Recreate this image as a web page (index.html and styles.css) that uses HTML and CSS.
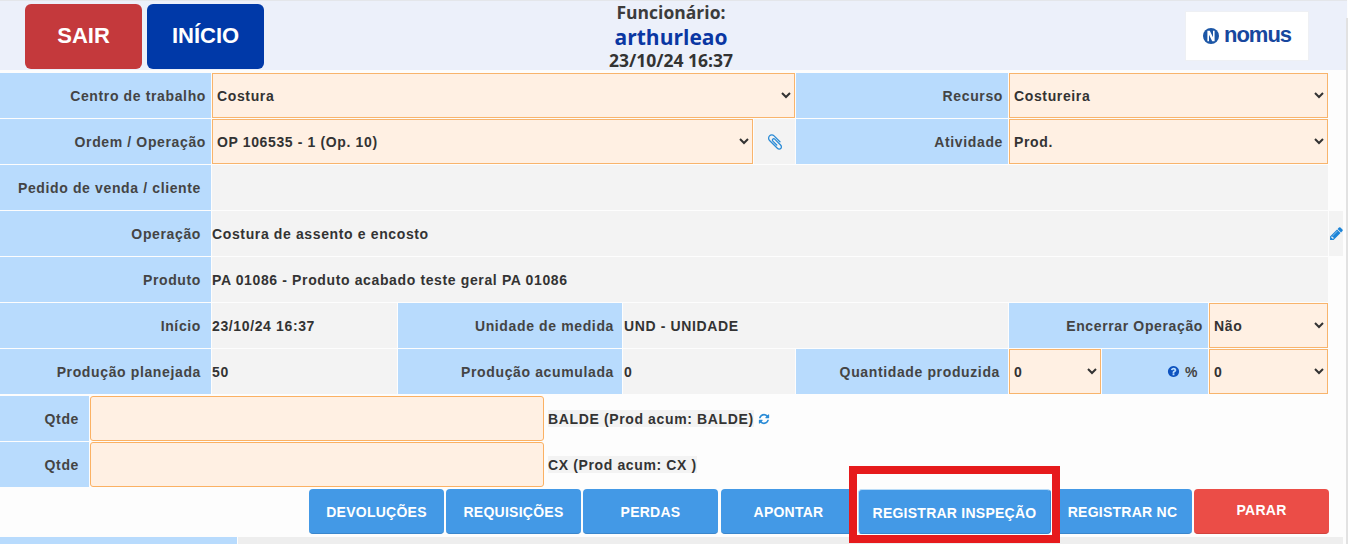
FILE: index.html
```html
<!DOCTYPE html>
<html lang="en">
<head>
    <meta charset="UTF-8">
    <meta name="viewport" content="width=device-width, initial-scale=1.0">
    <title>Apontamento</title>
    <link rel="stylesheet" href="styles.css">
</head>
<body>
    <!-- Top bar -->
    <div class="top-bar">
        <div class="top-buttons">
            <a class="big-button exit-button" href="#">SAIR</a>
            <a class="big-button home-button" href="#">INÍCIO</a>
        </div>
        <div class="employee">
            <div class="employee-title">Funcionário:</div>
            <div class="employee-name">arthurleao</div>
            <div class="employee-date">23/10/24 16:37</div>
        </div>
        <div class="logo">
            <svg class="logo-mark" viewBox="0 0 20 20" aria-hidden="true">
                <circle cx="10" cy="10" r="10" fill="#1c56a6"/>
                <path d="M5.500 3.500h3l4 8v-8h2v13h-3l-4-8v8h-2z" fill="#fff"/>
            </svg>
            <span class="logo-text">nomus</span>
        </div>
    </div>

    <!-- Main form -->
    <form class="form-grid" onsubmit="return false;">
        <div class="cell label span-2 near">Centro de trabalho</div>
        <div class="cell field span-centro">
            <select><option>Costura</option></select>
        </div>
        <div class="cell label span-recurso near">Recurso</div>
        <div class="cell field span-right">
            <select><option>Costureira</option></select>
        </div>

        <div class="cell label span-2 near">Ordem / Operação</div>
        <div class="cell field span-ordem">
            <select><option>OP 106535 - 1 (Op. 10)</option></select>
        </div>
        <div class="cell value icon-cell">
            <svg class="icon clip-icon" viewBox="0 0 1792 1792" aria-hidden="true"><path d="M1596 1385q0 117-79 196t-196 79q-135 0-235-100l-777-776q-113-115-113-271 0-159 110-270t269-111q158 0 273 113l605 606q10 10 10 22 0 16-30.500 46.500t-46.500 30.500q-13 0-23-10l-606-607q-79-77-181-77-106 0-179 75t-73 181q0 105 76 181l776 777q63 63 145 63 64 0 106-42t42-106q0-82-63-145l-581-581q-26-24-60-24-29 0-48 19t-19 48q0 32 25 59l410 410q10 10 10 22 0 16-31 47t-47 31q-12 0-22-10l-410-410q-63-61-63-149 0-82 57-139t139-57q88 0 149 63l581 581q100 98 100 235z"/></svg>
        </div>
        <div class="cell label span-recurso near">Atividade</div>
        <div class="cell field span-right">
            <select><option>Prod.</option></select>
        </div>

        <div class="cell label span-2">Pedido de venda / cliente</div>
        <div class="cell value span-wide"></div>

        <div class="cell label span-2">Operação</div>
        <div class="cell value span-wide">Costura de assento e encosto</div>
        <div class="cell value pencil-cell">
            <svg class="icon pencil-icon" viewBox="0 0 1792 1792" aria-hidden="true"><path d="M491 1536l91-91-235-235-91 91v107h128v128h107zm523-928q0-22-22-22-10 0-17 7l-542 542q-7 7-7 17 0 22 22 22 10 0 17-7l542-542q7-7 7-17zm-54-192l416 416-832 832h-416v-416zm683 96q0 53-37 90l-166 166-416-416 166-165q36-38 90-38 53 0 91 38l235 234q37 39 37 91z"/></svg>
        </div>

        <div class="cell label span-2">Produto</div>
        <div class="cell value span-wide">PA 01086 - Produto acabado teste geral PA 01086</div>

        <div class="cell label span-2">Início</div>
        <div class="cell value">23/10/24 16:37</div>
        <div class="cell label span-unidade mid">Unidade de medida</div>
        <div class="cell value span-und inset">UND - UNIDADE</div>
        <div class="cell label span-encerrar near">Encerrar Operação</div>
        <div class="cell field">
            <select><option>Não</option></select>
        </div>

        <div class="cell label span-2">Produção planejada</div>
        <div class="cell value">50</div>
        <div class="cell label span-unidade mid">Produção acumulada</div>
        <div class="cell value span-acum inset">0</div>
        <div class="cell label mid">Quantidade produzida</div>
        <div class="cell field">
            <select><option>0</option></select>
        </div>
        <div class="cell label">
            <svg class="icon help-icon" viewBox="0 0 1792 1792" aria-hidden="true"><path d="M1024 1376v-192q0-14-9-23t-23-9h-192q-14 0-23 9t-9 23v192q0 14 9 23t23 9h192q14 0 23-9t9-23zm256-672q0-88-55.500-163t-138.500-116-170-41q-243 0-371 213-15 24 8 42l132 100q7 6 19 6 16 0 25-12 53-68 86-92 34-24 86-24 48 0 85.500 26t37.500 59q0 38-20 61t-68 45q-63 28-115.500 86.500t-52.500 125.500v36q0 14 9 23t23 9h192q14 0 23-9t9-23q0-19 21.500-49.500t54.500-49.500q32-18 49-28.500t46-35 44.500-48 28-60.500 12.500-81zm384 192q0 209-103 385.500t-279.500 279.500-385.500 103-385.500-103-279.500-279.500-103-385.500 103-385.500 279.500-279.500 385.500-103 385.500 103 279.500 279.500 103 385.500z"/></svg>
            %
        </div>
        <div class="cell field">
            <select><option>0</option></select>
        </div>
    </form>

    <!-- Quantity rows -->
    <div class="qty-rows">
        <div class="cell label">Qtde</div>
        <input class="qty-input" type="text">
        <div class="qty-unit">
            <span class="qty-text">BALDE (Prod acum: BALDE)</span>
            <svg class="icon refresh-icon" viewBox="0 0 1792 1792" aria-hidden="true"><path d="M1639 1056q0 5-1 7-64 268-268 434.500t-478 166.500q-146 0-282.500-55t-243.500-157l-129 129q-19 19-45 19t-45-19-19-45v-448q0-26 19-45t45-19h448q26 0 45 19t19 45-19 45l-137 137q71 66 161 102t187 36q134 0 250-65t186-179q11-17 53-117 8-23 30-23h192q13 0 22.500 9.500t9.500 22.500zm25-800v448q0 26-19 45t-45 19h-448q-26 0-45-19t-19-45 19-45l138-138q-148-137-349-137-134 0-250 65t-186 179q-11 17-53 117-8 23-30 23h-199q-13 0-22.500-9.500t-9.500-22.500v-7q65-268 270-434.500t480-166.500q146 0 284 55.500t245 156.500l130-129q19-19 45-19t45 19 19 45z"/></svg>
        </div>
        <div class="cell label">Qtde</div>
        <input class="qty-input" type="text">
        <div class="qty-unit">
            <span class="qty-text">CX (Prod acum: CX )</span>
        </div>
    </div>

    <!-- Action buttons -->
    <div class="actions">
        <button class="action-button">DEVOLUÇÕES</button>
        <button class="action-button">REQUISIÇÕES</button>
        <button class="action-button wider">PERDAS</button>
        <button class="action-button">APONTAR</button>
        <button class="action-button inspect">REGISTRAR INSPEÇÃO</button>
        <button class="action-button register-nc">REGISTRAR NC</button>
        <button class="action-button stop-button">PARAR</button>
    </div>

    <!-- Next table, cut off by the window -->
    <div class="bottom-strip">
        <div class="bottom-label"></div>
        <div class="bottom-value"></div>
    </div>

    <!-- Red mark drawn over the screenshot -->
    <div class="highlight-box"></div>
    <div class="page-edge"></div>
</body>
</html>
```

FILE: styles.css
```css
html, body {
    height: 100%;
    overflow: hidden;
}
body {
    background-color: #fdfdfd;
    color: #333;
    font-family: "Liberation Sans", Arial, sans-serif;
    font-size: 14px;
    font-weight: bold;
    letter-spacing: 0.63px;
    margin: 0;
    padding: 0;
    position: relative;
}

/* Top bar */
.top-bar {
    background-color: #ecf0fa;
    border-top: 1px solid #e4e6ea;
    display: grid;
    grid-template-columns: 1fr auto 1fr;
    height: 69px;
    margin-right: 1px;
    padding-right: 5px;
}
.top-buttons {
    display: flex;
    gap: 5px;
    padding: 3px 0 0 25px;
}
.big-button {
    border-radius: 6px;
    color: white;
    display: block;
    font-size: 22px;
    height: 65px;
    letter-spacing: 0;
    line-height: 63px;
    text-align: center;
    text-decoration: none;
    width: 117px;
}
.exit-button {
    background-color: #c4393c;
}
.home-button {
    background-color: #0039a8;
}
.employee {
    font-family: "Open Sans", sans-serif;
    letter-spacing: 0;
    text-align: center;
}
.employee-title {
    color: #3c3c3c;
    font-size: 17.500px;
    line-height: 22px;
}
.employee-name {
    color: #0a37a3;
    font-size: 21px;
    line-height: 26px;
    margin-top: 1px;
}
.employee-date {
    color: #333;
    font-size: 17.500px;
    line-height: 20px;
}
.logo {
    align-items: center;
    background-color: white;
    border: 1px solid #eef0f4;
    box-sizing: border-box;
    display: flex;
    gap: 5px;
    height: 50px;
    justify-content: center;
    justify-self: end;
    margin: 10px 33px 0 0;
    width: 124px;
}
.logo-mark {
    height: 16px;
    width: 16px;
}
.logo-text {
    color: #17479e;
    font-family: "Liberation Sans", sans-serif;
    font-size: 22px;
    font-weight: bold;
    letter-spacing: -1px;
    line-height: 1;
    margin-top: -3px;
}

/* Main form */
.form-grid {
    display: grid;
    gap: 1px;
    grid-auto-rows: 45px;
    grid-template-columns: 89px 121px 185px 146px 77px 130px 41px 212px 92px 106px 119px 14px;
    margin-top: 3px;
}
.cell {
    align-items: center;
    box-sizing: border-box;
    display: flex;
    min-width: 0;
}
.label {
    background-color: #b8dbfd;
    color: #444;
    justify-content: flex-end;
    padding-right: 10px;
}
.label.near {
    padding-right: 5px;
}
.label.mid {
    padding-right: 8px;
}
.value {
    background-color: #f3f3f3;
}
.value.inset {
    padding-left: 1px;
}
.span-2 {
    grid-column: span 2;
}
.span-centro {
    grid-column: span 5;
}
.span-ordem {
    grid-column: span 4;
}
.span-recurso {
    grid-column: 8;
}
.span-right {
    grid-column: span 3;
}
.span-wide {
    grid-column: 3 / span 9;
}
.span-unidade {
    grid-column: span 2;
}
.span-und {
    grid-column: span 3;
}
.span-acum {
    grid-column: span 2;
}
.span-encerrar {
    grid-column: span 2;
}
.field select {
    background-color: #fff0e3;
    border: 1px solid #f8b46c;
    border-radius: 0;
    box-sizing: border-box;
    color: #333;
    font: inherit;
    height: 100%;
    letter-spacing: inherit;
    outline: none;
    width: 100%;
}
.field {
    align-items: stretch;
}
.icon-cell {
    justify-content: center;
}
.pencil-cell {
    justify-content: center;
}
.icon {
    display: block;
    flex: none;
}
.clip-icon {
    fill: #2a8bd6;
    height: 18px;
    width: 18px;
}
.pencil-icon {
    fill: #1b84d8;
    height: 15px;
    width: 15px;
}
.help-icon {
    fill: #0d52bf;
    height: 13px;
    margin-right: 5px;
    width: 13px;
}
.refresh-icon {
    fill: #2a8bd6;
    height: 12px;
    margin-left: 4px;
    width: 12px;
}

/* Quantity rows */
.qty-rows {
    display: grid;
    gap: 1px;
    grid-auto-rows: 45px;
    grid-template-columns: 89px 454px 1fr;
    margin-top: 2px;
}
.qty-input {
    background-color: #fff0e3;
    border: 1px solid #fbb163;
    border-radius: 3px;
    box-sizing: border-box;
    height: 100%;
    margin: 0;
    outline: none;
    width: 100%;
}
.qty-unit {
    align-items: center;
    display: flex;
    padding-left: 3px;
}
.qty-text {
    background-color: #f3f3f3;
    line-height: 16px;
    padding-top: 1px;
}

/* Action buttons */
.actions {
    display: flex;
    gap: 2px;
    justify-content: flex-end;
    margin-top: 2px;
    padding-right: 19px;
}
.action-button {
    background-color: #4399e6;
    border: none;
    border-bottom: 1px solid #3a86cc;
    border-radius: 4px;
    color: white;
    cursor: pointer;
    font: inherit;
    height: 45px;
    letter-spacing: 0.25px;
    padding: 2px 0 0;
    width: 135px;
}
.action-button.wider {
    margin-right: 1px;
}
.action-button.inspect {
    border: 1px solid #3a86cc;
    border-color: #b9dcf8 #3a86cc #3a86cc #b9dcf8;
    width: 193px;
}
.action-button.register-nc {
    width: 139px;
}
.action-button.stop-button {
    background-color: #eb4d47;
    border-bottom-color: #d2423d;
    padding: 0 0 2px;
}

/* Next table */
.bottom-strip {
    display: flex;
    gap: 1px;
    height: 7px;
    margin-top: 3px;
    padding-right: 5px;
}
.bottom-label {
    background-color: #b8dbfd;
    width: 237px;
}
.bottom-value {
    background-color: #eeeeee;
    flex: 1;
}

.highlight-box {
    border: 8px solid #e61a1c;
    box-sizing: border-box;
    height: 77px;
    left: 849px;
    position: absolute;
    top: 466px;
    width: 211px;
}
.page-edge {
    background-color: #e2e2e2;
    bottom: 0;
    position: absolute;
    right: 0;
    top: 18px;
    width: 2px;
}
```
